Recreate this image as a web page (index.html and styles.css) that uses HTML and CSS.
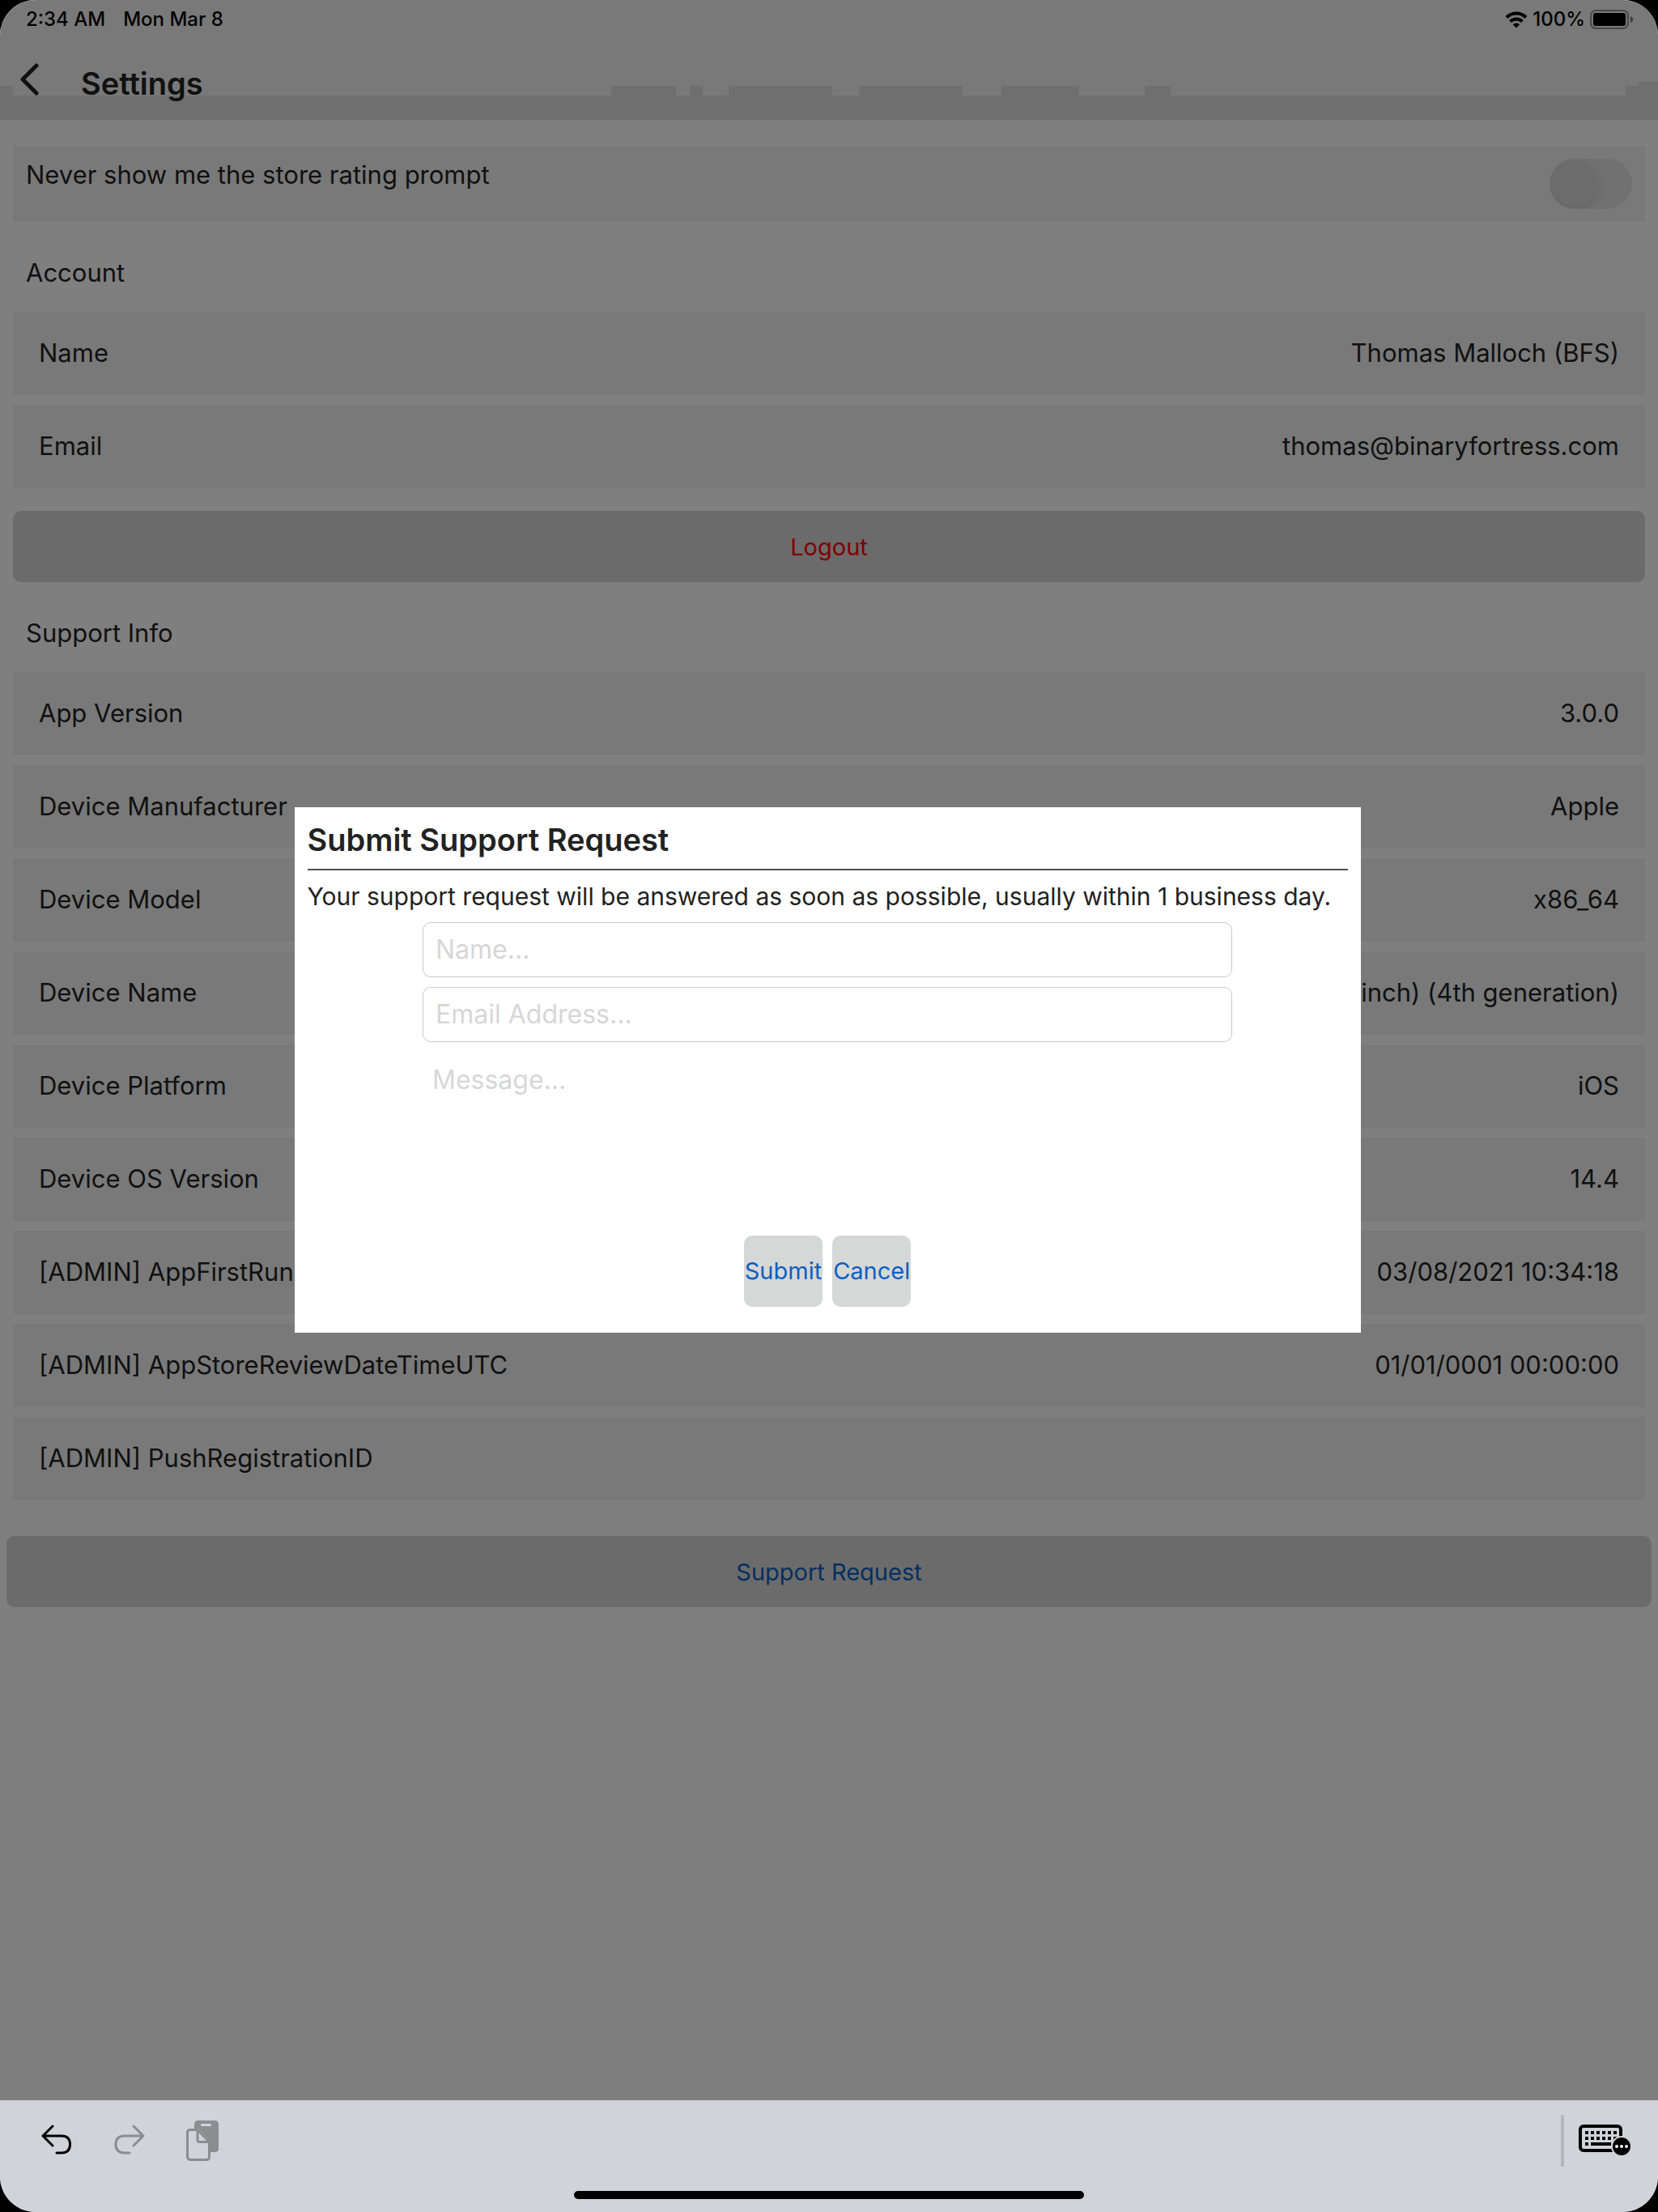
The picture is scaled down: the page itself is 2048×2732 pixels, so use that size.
FILE: index.html
```html
<!DOCTYPE html>
<html lang="en">
<head>
    <meta charset="UTF-8">
    <meta name="viewport" content="width=device-width, initial-scale=1.0">
    <title>Settings</title>
    <link rel="stylesheet" href="styles.css">
</head>
<body>
    <div class="screen">
        <div class="content">
            <header>
                <div class="status-bar">
                    <span>2:34 AM</span>
                    <span>Mon Mar 8</span>
                    <div class="status-right">
                        <svg width="28" height="21" viewBox="0 0 28 21">
                            <path d="M2 7.500a17 17 0 0 1 24 0" fill="none" stroke="#000" stroke-width="4"/>
                            <path d="M6.500 12.500a10.600 10.600 0 0 1 15 0" fill="none" stroke="#000" stroke-width="4"/>
                            <path d="M14 20.500l-4.200-4.300a6 6 0 0 1 8.400 0z"/>
                        </svg>
                        <span>100%</span>
                        <svg width="54" height="24" viewBox="0 0 54 24">
                            <rect x="1" y="1" width="46" height="22" rx="6" fill="none" stroke="#000" stroke-opacity=".4" stroke-width="2"/>
                            <rect x="4" y="4" width="40" height="16" rx="3"/>
                            <path d="M50 8q3 1 3 4t-3 4z" fill-opacity=".5"/>
                        </svg>
                    </div>
                </div>
                <div class="nav">
                    <button class="back" aria-label="Back">
                        <svg width="24" height="40" viewBox="0 0 24 40"><path d="M21 3L4 20L21 37" fill="none" stroke="#222" stroke-width="5" stroke-linecap="round" stroke-linejoin="round"/></svg>
                    </button>
                    <h1>Settings</h1>
                </div>
                <svg class="nav-shadow" viewBox="0 0 2048 47" preserveAspectRatio="none">
                    <path fill="#dfdfdf" d="M0 47V5H16V17H755V5H835V17H852V5H868V17H900V5H1028V17H1061V5H1189V17H1237V5H1333V17H1414V5H1446V17H2008V5H2024V0H2048V47Z"/>
                </svg>
            </header>

            <main>
                <div class="toggle-row">
                    <label for="rating">Never show me the store rating prompt</label>
                    <input type="checkbox" id="rating">
                </div>

                <h2>Account</h2>
                <dl>
                    <div><dt>Name</dt><dd>Thomas Malloch (BFS)</dd></div>
                    <div><dt>Email</dt><dd>thomas@binaryfortress.com</dd></div>
                </dl>
                <button class="btn logout">Logout</button>

                <h2>Support Info</h2>
                <dl>
                    <div><dt>App Version</dt><dd>3.0.0</dd></div>
                    <div><dt>Device Manufacturer</dt><dd>Apple</dd></div>
                    <div><dt>Device Model</dt><dd>x86_64</dd></div>
                    <div><dt>Device Name</dt><dd>iPad Pro (12.9-inch) (4th generation)</dd></div>
                    <div><dt>Device Platform</dt><dd>iOS</dd></div>
                    <div><dt>Device OS Version</dt><dd>14.4</dd></div>
                    <div><dt>[ADMIN] AppFirstRunDateTimeUTC</dt><dd>03/08/2021 10:34:18</dd></div>
                    <div><dt>[ADMIN] AppStoreReviewDateTimeUTC</dt><dd>01/01/0001 00:00:00</dd></div>
                    <div><dt>[ADMIN] PushRegistrationID</dt><dd></dd></div>
                </dl>
            </main>
            <button class="btn support">Support Request</button>

            <div class="overlay">
                <form class="modal">
                    <h3>Submit Support Request</h3>
                    <p>Your support request will be answered as soon as possible, usually within 1 business day.</p>
                    <input type="text" placeholder="Name..." aria-label="Name">
                    <input type="email" placeholder="Email Address..." aria-label="Email Address">
                    <textarea placeholder="Message..." aria-label="Message"></textarea>
                    <div class="modal-buttons">
                        <button type="button" class="btn">Submit</button>
                        <button type="button" class="btn">Cancel</button>
                    </div>
                </form>
            </div>
        </div>

        <footer>
            <button aria-label="Undo">
                <svg width="40" height="40" viewBox="0 0 40 40" fill="none" stroke="#000" stroke-width="3" stroke-linecap="round" stroke-linejoin="round"><path d="M15 2L3 14L15 26M3 14H26Q36.500 14 36.500 24.500Q36.500 35 26 35H20"/></svg>
            </button>
            <button aria-label="Redo" disabled>
                <svg width="40" height="40" viewBox="0 0 40 40" fill="none" stroke="#8b8d90" stroke-width="3" stroke-linecap="round" stroke-linejoin="round"><path d="M25 2L37 14L25 26M37 14H14Q3 14 3 24.500Q3 35 14 35H20"/></svg>
            </button>
            <button aria-label="Paste" disabled>
                <svg width="40" height="50" viewBox="0 0 40 50">
                    <path fill="#8b8d90" d="M15 0H35Q40 0 40 5V35Q40 39 35 39H29V25L15 10H10V5Q10 0 15 0Z"/>
                    <rect x="18" y="4" width="13" height="3" rx="1" fill="#d0d3d9"/>
                    <path fill="#d0d3d9" stroke="#8b8d90" stroke-width="3" stroke-linejoin="round" d="M14 11.500H5Q1.500 11.500 1.500 15V44Q1.500 48.500 6 48.500H25Q28.500 48.500 28.500 44V26.500L14 11.500V24Q14 26.500 17 26.500H28.500"/>
                </svg>
            </button>
            <button class="keyboard" aria-label="Keyboard">
                <svg width="66" height="40" viewBox="0 0 66 40">
                    <rect x="2" y="2" width="50" height="30" rx="4" fill="none" stroke="#000" stroke-width="4"/>
                    <path d="M8 10H48M8 17H48" stroke="#000" stroke-width="4" stroke-dasharray="4 3"/>
                    <path d="M8 24H12M15 24H40" stroke="#000" stroke-width="4"/>
                    <circle cx="53" cy="27" r="12" stroke="#d0d3d9" stroke-width="2"/>
                    <g fill="#fff"><circle cx="47" cy="27" r="2"/><circle cx="53" cy="27" r="2"/><circle cx="59" cy="27" r="2"/></g>
                </svg>
            </button>
            <div class="home-bar"></div>
        </footer>
    </div>
</body>
</html>
```
FILE: styles.css
```css
* {
    box-sizing: border-box;
}
body {
    font-family: Inter, "Liberation Sans", sans-serif;
    font-size: 31px;
    line-height: 40px;
    background-color: #000;
    color: #222;
    margin: 0;
}
.screen {
    display: flex;
    flex-direction: column;
    min-height: 100vh;
    background-color: #fff;
    border-radius: 44px;
    overflow: hidden;
}
.content {
    position: relative;
    flex: 1;
    display: flex;
    flex-direction: column;
}
h1, h2, h3, p, dl, dd {
    margin: 0;
    font-weight: 400;
    font-size: inherit;
}
button, input, textarea {
    font-family: inherit;
    margin: 0;
}

/* header */
header {
    position: relative;
    height: 148px;
    background-color: #f2f2f2;
}
.status-bar {
    display: flex;
    align-items: center;
    gap: 22px;
    height: 48px;
    padding: 0 30px 0 32px;
    font-size: 24px;
    font-weight: 500;
    color: #000;
}
.status-right {
    display: flex;
    align-items: center;
    gap: 6px;
    margin-left: auto;
}
.nav {
    position: relative;
    z-index: 1;
    display: flex;
    align-items: center;
    gap: 50px;
    height: 100px;
    padding: 10px 24px 0;
}
.back {
    display: flex;
    width: 26px;
    height: 50px;
    padding: 0;
    border: none;
    background: none;
}
h1, h3 {
    font-size: 38px;
    font-weight: 600;
}
.nav-shadow {
    position: absolute;
    left: 0;
    bottom: 0;
    width: 100%;
    height: 47px;
}

/* settings list */
main {
    padding: 32px 16px 0;
}
.toggle-row {
    display: flex;
    justify-content: space-between;
    height: 94px;
    padding: 16px;
    background-color: #f2f2f2;
}
.toggle-row input {
    appearance: none;
    width: 102px;
    height: 62px;
    border-radius: 31px;
    background-color: #e2e2e2;
    overflow: hidden;
}
.toggle-row input::before {
    content: "";
    display: block;
    width: 58px;
    height: 58px;
    margin: 1px 2px;
    border-radius: 50%;
    background-color: #d8d8d8;
    box-shadow: 0 4px 10px rgba(0, 0, 0, 0.1);
}
h2 {
    padding: 43px 16px 28px;
}
dl {
    display: flex;
    flex-direction: column;
    gap: 12px;
}
dl div {
    display: flex;
    justify-content: space-between;
    height: 103px;
    padding: 31px 32px;
    background-color: #f2f2f2;
}
.btn {
    height: 88px;
    padding: 0 1px;
    border: none;
    border-radius: 10px;
    background-color: #d6d7d7;
    color: #0a60c0;
    font-size: 29px;
}
.logout {
    width: 100%;
    margin-top: 28px;
    color: #ff0000;
}
.support {
    margin: 44px 8px;
}

/* support request popup */
.overlay {
    position: absolute;
    inset: 0;
    z-index: 2;
    display: flex;
    align-items: center;
    justify-content: center;
    padding: 48px 4px 0 0;
    background-color: rgba(0, 0, 0, 0.5);
}
.modal {
    display: flex;
    flex-direction: column;
    align-items: center;
    gap: 12px;
    width: 1317px;
    padding: 16px 16px 32px;
    background-color: #fff;
}
.modal h3 {
    width: 100%;
    height: 62px;
    line-height: 48px;
    border-bottom: 2px solid #505050;
}
.modal p {
    width: 100%;
    font-size: 30px;
}
.modal input, .modal textarea {
    width: 1000px;
    max-width: 100%;
    height: 68px;
    padding: 0 15px;
    border: 1px solid #c8c8c8;
    border-radius: 10px;
    font-size: 32px;
}
.modal textarea {
    height: 215px;
    padding: 14px 11px;
    border-color: transparent;
    resize: none;
}
.modal ::placeholder {
    color: #d6d7d7;
}
.modal-buttons {
    display: flex;
    gap: 12px;
}

/* keyboard bar */
footer {
    position: relative;
    display: flex;
    align-items: flex-start;
    gap: 50px;
    height: 138px;
    padding: 18px 32px 0 50px;
    background-color: #d0d3d9;
}
footer button {
    display: flex;
    align-items: center;
    height: 64px;
    padding: 0;
    border: none;
    background: none;
}
.keyboard {
    margin-left: auto;
    padding-left: 18px;
    border-left: 4px solid #b4b7ba;
}
.home-bar {
    position: absolute;
    left: 50%;
    bottom: 16px;
    width: 630px;
    height: 10px;
    margin-left: -315px;
    border-radius: 5px;
    background-color: #000;
}
```
